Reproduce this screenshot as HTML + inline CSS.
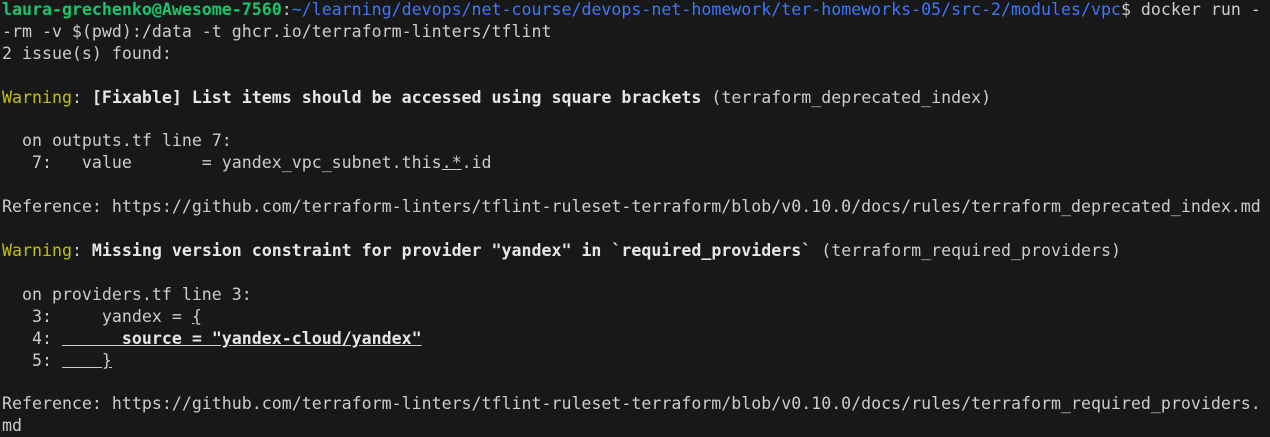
<!DOCTYPE html>
<html><head><meta charset="utf-8"><style>
html,body{margin:0;padding:0;background:#181818;width:1270px;height:435px;overflow:hidden}
pre{margin:0;position:absolute;top:-1px;left:2px;font-family:"DejaVu Sans Mono","Liberation Mono",monospace;font-size:16.6px;line-height:21.9px;color:#cccccc;white-space:pre}
.g{color:#16c66c;font-weight:bold}
.b{color:#3b78ff}
.y{color:#c1c100}
.w{color:#e6e6e6;font-weight:bold}
u{text-decoration:underline}
</style></head><body><pre><span class="g">laura-grechenko@Awesome-7560</span>:<span class="b">~/learning/devops/net-course/devops-net-homework/ter-homeworks-05/src-2/modules/vpc</span>$ docker run -
-rm -v $(pwd):/data -t ghcr.io/terraform-linters/tflint
2 issue(s) found:

<span class="y">Warning</span>: <span class="w">[Fixable] List items should be accessed using square brackets</span> (terraform_deprecated_index)

  on outputs.tf line 7:
   7:   value       = yandex_vpc_subnet.this<u>.*</u>.id

Reference: https://github.com/terraform-linters/tflint-ruleset-terraform/blob/v0.10.0/docs/rules/terraform_deprecated_index.md

<span class="y">Warning</span>: <span class="w">Missing version constraint for provider "yandex" in `required_providers`</span> (terraform_required_providers)

  on providers.tf line 3:
   3:     yandex = <u>{</u>
   4: <u>      <span class="w">source = "yandex-cloud/yandex"</span></u>
   5: <u>    }</u>

Reference: https://github.com/terraform-linters/tflint-ruleset-terraform/blob/v0.10.0/docs/rules/terraform_required_providers.
md</pre></body></html>
